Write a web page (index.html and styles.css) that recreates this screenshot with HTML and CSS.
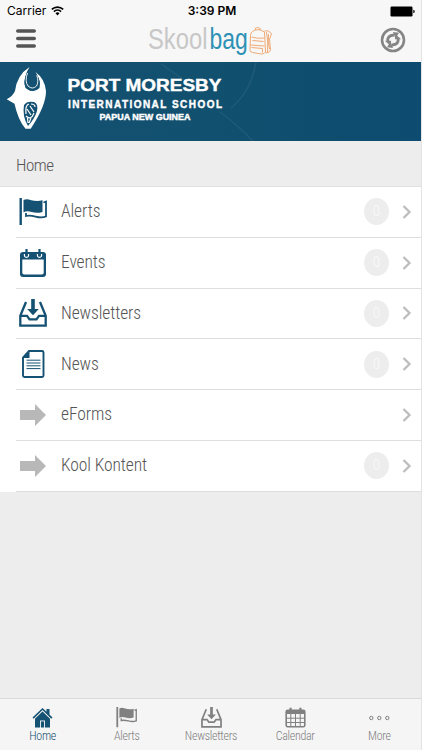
FILE: index.html
```
<!DOCTYPE html>
<html lang="en">
<head>
  <meta charset="UTF-8">
  <meta name="viewport" content="width=device-width, initial-scale=1.0">
  <title>Skoolbag</title>
  <link rel="stylesheet" href="styles.css">
</head>
<body>
  <!-- shared icons -->
  <svg class="sprite" width="0" height="0">
    <symbol id="flag" viewBox="0 0 28 28">
      <path d="M.5 0h2.400v27H.5z" fill="currentColor"/>
      <path d="M4.500 2c5-3 9 3 19 .3V14C14 17 10 11 4.500 14.500z" fill="currentColor"/>
      <path d="M24.500 4.500l2.500-1v15c-8 3.200-12-2.600-20-.5v-3" fill="none" stroke="currentColor" stroke-width="1.800"/>
    </symbol>
    <symbol id="tray" viewBox="0 0 28 28">
      <path d="M7 3L1.300 16.800V26.600h25.400V16.800L21 3M1.300 16.800H8l2.500 3.500h7l2.500-3.500h6.700" fill="none" stroke="currentColor" stroke-width="2.300"/>
      <path d="M12.200 0h3.600v10h4L14 16.300 8.200 10h4z" fill="currentColor"/>
    </symbol>
    <symbol id="arrow" viewBox="0 0 26 22">
      <path d="M0 6h15V0l11 11-11 11v-6H0z" fill="currentColor"/>
    </symbol>
    <symbol id="chevron" viewBox="0 0 10 14">
      <path d="M1.500 1l6 6-6 6" fill="none" stroke="currentColor" stroke-width="2.300"/>
    </symbol>
  </svg>

  <div class="app">
    <header class="top">
      <div class="status">
        <div class="carrier">
          <span>Carrier</span>
          <svg width="13" height="10" viewBox="0 0 13 10">
            <path d="M.8 3.400a8.200 8.200 0 0 1 11.400 0M2.900 5.600a5.200 5.200 0 0 1 7.200 0" fill="none" stroke="#000" stroke-width="1.600"/>
            <path d="M4.500 7.200a3 3 0 0 1 4 0L6.500 9.400z"/>
          </svg>
        </div>
        <div class="time">3:39 PM</div>
        <svg class="battery" width="25" height="11" viewBox="0 0 25 11">
          <rect x=".5" y=".5" width="22" height="10" rx="1.200"/>
          <path d="M23.300 3.700q1.400.2 1.400 1.800t-1.400 1.800z"/>
        </svg>
      </div>
      <div class="nav">
        <svg class="menu" width="20" height="19" viewBox="0 0 20 19">
          <path d="M1.800 2h16.400M1.800 9.500h16.400M1.800 17h16.400" stroke="#555" stroke-width="3.600" stroke-linecap="round"/>
        </svg>
        <svg class="logo" width="128" height="38" viewBox="0 0 128 38">
          <text class="skool" transform="translate(2 28) scale(.82 1)">Skool</text>
          <text class="bag" transform="translate(63.500 28) scale(.79 1)">bag</text>
          <g transform="translate(.5 6)" fill="none" stroke="#efaa75" stroke-width="1">
            <path d="M106 4.500q5-4 12 .5l1 20q-1 2-4 2l-9-1.500q-3-.5-2.500-3l.5-14q0-3 2-4z"/>
            <path d="M109 3q-1-2.500 2-2.500t3 2.500M105 10q6 2 13 1M104 18l14 1M106 13.500l11 1M105 20.500l11 1v4M118 4q5-1 7 3l-2 5 1 11q-1 3-5 3M120 5q2 10 1 20M122 7q-1 8 1 15"/>
          </g>
        </svg>
        <svg width="26" height="26" viewBox="0 0 26 26">
          <circle cx="13" cy="13" r="11" fill="none" stroke="#858585" stroke-width="2.600"/>
          <path d="M8 15q-1.500-6.500 6-7M18 11q1.500 6.500-6 7" fill="none" stroke="#858585" stroke-width="2.800"/>
          <path d="M13 5l6 .8-3.600 6zM13 21l-6-.8 3.600-6zM4.800 13.800h6.400l-1.200 4.400zM21.200 12.200h-6.400l1.200-4.400z" fill="#858585"/>
        </svg>
      </div>
    </header>

    <div class="banner">
      <svg width="421" height="79" viewBox="0 0 421 79">
        <path d="M161 2l32 22M220 50q14 10 33 29M256 0q-5 30-25 46" fill="none" stroke="#3d7190" stroke-width="1.500" opacity=".35"/>
        <!-- school emblem -->
        <path d="M29.500 5Q17 13 15 29Q13 34 6.700 37.300L14.500 41.700Q18 58 25.500 66.700h5.200Q39 54 42.500 45Q46 36 46 29Q45 17 35.500 10q6 9 4 16-6 6-14 0Q23 15 29.500 5z" fill="#fff"/>
        <path d="M29 8q-7 12-2.500 18 5.500 5 11 0 3.500-6-1.500-14" fill="#155172" stroke="#155172" stroke-width="1"/>
        <path d="M27.500 11q-3 8 .5 13 4.500 4 8.500 0 2.500-4 .3-11" fill="none" stroke="#fff" stroke-width=".9"/>
        <path d="M24 43q3-4.500 10-3 4.500 2 3 9-2.500 8-9 15-6-10-4-21z" fill="#155172"/>
        <path d="M26 52q-1-9 3-10M31 42q4 0 4 3M27 47l4 6M30 44l4 6M26 54q5 5 8-3M27.500 56l.5 5M31 56l-2 5" fill="none" stroke="#fff" stroke-width="1.200"/>
        <g class="school">
          <text x="67.500" y="29.300" font-size="16.500" textLength="154" lengthAdjust="spacingAndGlyphs">PORT MORESBY</text>
          <text class="line2" x="68" y="45.600" textLength="154">INTERNATIONAL SCHOOL</text>
          <text x="99.500" y="58.300" font-size="8.200" textLength="91" lengthAdjust="spacingAndGlyphs">PAPUA NEW GUINEA</text>
        </g>
      </svg>
    </div>

    <h1>Home</h1>

    <ul class="list">
      <li>
        <svg class="icon" width="28" height="28"><use href="#flag"/></svg>
        <span class="label">Alerts</span>
        <span class="badge">0</span>
        <svg class="chevron"><use href="#chevron"/></svg>
      </li>
      <li>
        <svg class="icon" width="28" height="28" viewBox="0 0 28 28">
          <path d="M4 3h20q3 0 3 3v19q0 3-3 3H4q-3 0-3-3V6q0-3 3-3zM3.300 10.500v13.300q0 1.700 1.700 1.700h18q1.700 0 1.700-1.700V10.500z" fill="currentColor" fill-rule="evenodd"/>
          <path d="M7.500 0v6M20.500 0v6" stroke="currentColor" stroke-width="2.200"/>
          <path d="M5.500 5q-.5 3.400 2 3.400T9.500 5M18.500 5q-.5 3.400 2 3.400t2-3.400" fill="none" stroke="#fff" stroke-width="1.200"/>
        </svg>
        <span class="label">Events</span>
        <span class="badge">0</span>
        <svg class="chevron"><use href="#chevron"/></svg>
      </li>
      <li>
        <svg class="icon" width="28" height="28"><use href="#tray"/></svg>
        <span class="label">Newsletters</span>
        <span class="badge">0</span>
        <svg class="chevron"><use href="#chevron"/></svg>
      </li>
      <li>
        <svg class="icon" width="28" height="28" viewBox="0 0 28 28">
          <path d="M10 1h13q1.500 0 1.500 1.500v23q0 1.500-1.500 1.500H5.500Q4 27 4 25.500V7.500z" fill="none" stroke="currentColor" stroke-width="1.900"/>
          <path d="M10.500 1v7H4z" fill="currentColor"/>
          <path d="M7.500 10.200h14M7.500 13h14M7.500 15.800h14M7.500 18.600h14" stroke="currentColor" stroke-width="1"/>
        </svg>
        <span class="label">News</span>
        <span class="badge">0</span>
        <svg class="chevron"><use href="#chevron"/></svg>
      </li>
      <li>
        <svg class="icon grey" width="28" height="22"><use href="#arrow"/></svg>
        <span class="label">eForms</span>
        <svg class="chevron"><use href="#chevron"/></svg>
      </li>
      <li>
        <svg class="icon grey" width="28" height="22"><use href="#arrow"/></svg>
        <span class="label">Kool Kontent</span>
        <span class="badge">0</span>
        <svg class="chevron"><use href="#chevron"/></svg>
      </li>
    </ul>

    <nav class="tabs">
      <a class="active">
        <svg width="21" height="21" viewBox="0 0 21 21">
          <path d="M10.500 1l4 3.800V2h3v5.600l3 2.900-1.200 1.200-8.800-8.600-8.800 8.600L.5 10.500z" fill="currentColor"/>
          <path d="M10.500 4.500l7.500 7.300V20.500H3v-8.700zM8 20.500h5v-7H8z" fill="currentColor" fill-rule="evenodd"/>
          <path d="M8.900 14.400h3.200v6.100H8.900z" fill="currentColor"/>
        </svg>
        <span>Home</span>
      </a>
      <a>
        <svg width="21" height="21"><use href="#flag"/></svg>
        <span>Alerts</span>
      </a>
      <a>
        <svg width="21" height="21"><use href="#tray"/></svg>
        <span>Newsletters</span>
      </a>
      <a>
        <svg width="21" height="21" viewBox="0 0 21 21">
          <rect x="1.200" y="3.200" width="18.600" height="16.600" rx="1.500" fill="none" stroke="currentColor" stroke-width="1.600"/>
          <path d="M1 3h19v4H1zM4.500.8h2.200V4H4.500zM14.300.8h2.200V4h-2.200z" fill="currentColor"/>
          <path d="M1 11.200h19M1 15.500h19M5.800 7v13M10.500 7v13M15.200 7v13" stroke="currentColor" stroke-width="1"/>
        </svg>
        <span>Calendar</span>
      </a>
      <a>
        <svg width="21" height="21" viewBox="0 0 21 21">
          <g fill="none" stroke="currentColor" stroke-width="1">
            <circle cx="2.300" cy="11" r="1.700"/>
            <circle cx="10.300" cy="11" r="1.700"/>
            <circle cx="18.300" cy="11" r="1.700"/>
          </g>
        </svg>
        <span>More</span>
      </a>
    </nav>
  </div>
</body>
</html>
```
FILE: styles.css
```
body {
  margin: 0;
  background: #f5f5f5;
  font-family: "Roboto Condensed", Roboto, sans-serif;
  font-stretch: 75%;
  font-weight: 300;
  color: #555;
}
.sprite {
  display: block;
}
.app {
  display: flex;
  flex-direction: column;
  width: 421px;
  height: 750px;
  background: #ededed;
  border-right: 1px solid #e3e3e3;
}
.top {
  height: 62px;
  background: #f7f7f7;
}
.status {
  display: grid;
  grid-template-columns: 1fr auto 1fr;
  align-items: center;
  height: 22px;
  padding: 0 6px 0 7px;
  font: 12px/22px Inter, sans-serif;
  color: #000;
}
.carrier {
  display: flex;
  align-items: center;
  gap: 5px;
}
.time {
  padding-left: 2px;
  font-weight: 600;
}
.battery {
  justify-self: end;
}
.nav {
  display: flex;
  align-items: center;
  justify-content: space-between;
  height: 36px;
  padding: 0 15px 0 16px;
}
.menu {
  margin-bottom: 4px;
}
.logo {
  margin-left: 4px;
}
.skool, .bag {
  font-family: "Liberation Sans", sans-serif;
  font-size: 29px;
}
.skool {
  fill: #c7c7c7;
}
.bag {
  fill: #2d91b5;
}
.banner {
  height: 79px;
  background: linear-gradient(90deg, #155172, #12506f 50%, #0d4b70);
}
.banner svg {
  display: block;
}
.school {
  font-family: "Liberation Sans", sans-serif;
  font-weight: bold;
  fill: #fff;
  stroke: #fff;
  stroke-width: .4;
}
.line2 {
  font-size: 10px;
}
h1 {
  height: 45px;
  margin: 0;
  padding-left: 16px;
  border-bottom: 1px solid #e0e0e0;
  font-size: 17px;
  line-height: 48px;
  font-weight: 300;
  letter-spacing: -.5px;
}
.list {
  margin: 0;
  padding: 0 0 0 16px;
  list-style: none;
  background: #fff;
}
.list li {
  display: flex;
  align-items: center;
  box-sizing: border-box;
  height: 50.800px;
  padding: 0 9px 0 3px;
  border-bottom: 1px solid #dedede;
}
.icon {
  color: #155172;
}
.grey {
  color: #b8b8b8;
}
.label {
  flex: 1;
  padding: 0 0 1.500px 14px;
  font-size: 17.500px;
  letter-spacing: -.1px;
}
.badge {
  width: 25px;
  height: 27px;
  margin-right: 13px;
  border-radius: 50%;
  background: #ededed;
  color: #fafafa;
  font-size: 15px;
  line-height: 27px;
  text-align: center;
}
.chevron {
  width: 10px;
  height: 14px;
  color: #bdbdbd;
}
.tabs {
  display: flex;
  height: 51px;
  margin-top: auto;
  border-top: 1px solid #dadada;
  background: #f5f5f5;
}
.tabs a {
  flex: 1;
  display: flex;
  flex-direction: column;
  align-items: center;
  padding: 8px 0 0 1px;
  color: #808080;
  font-size: 12px;
  line-height: 16px;
  letter-spacing: -.3px;
}
.tabs a.active {
  color: #155172;
}
```
